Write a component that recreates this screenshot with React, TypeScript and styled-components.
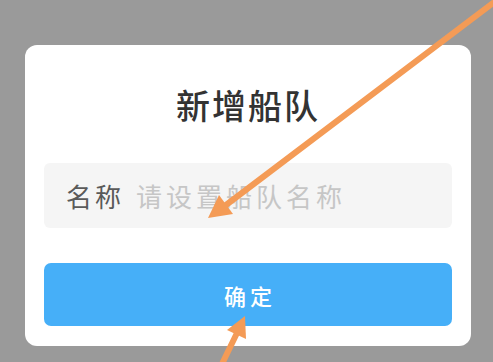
import styled, { createGlobalStyle } from "styled-components";

const GlobalStyle = createGlobalStyle`
  html, body {
    margin: 0;
    padding: 0;
    background: #9a9a9a;
  }
  body {
    font-family: "Noto Sans CJK SC", "Noto Sans", sans-serif;
  }
`;

const Page = styled.div`
  position: relative;
  width: 493px;
  height: 362px;
  overflow: hidden;
  padding: 45px 22px 0 25px;
  box-sizing: border-box;
`;

const Card = styled.div`
  width: 446px;
  height: 301px;
  box-sizing: border-box;
  background: #ffffff;
  border-radius: 12px;
  padding: 40px 19px 20px;
  display: flex;
  flex-direction: column;
`;

const Title = styled.h2`
  margin: 0;
  font-size: 34px;
  line-height: 40px;
  font-weight: 500;
  color: #333333;
  text-align: center;
  letter-spacing: 2px;
`;

const Field = styled.label`
  margin-top: 38px;
  height: 65px;
  border-radius: 6px;
  background: #f5f5f5;
  display: flex;
  align-items: center;
  gap: 12px;
  padding: 0 22px;
`;

const FieldLabel = styled.span`
  font-size: 26px;
  letter-spacing: 3px;
  color: #5a5a5a;
  white-space: nowrap;
`;

const FieldInput = styled.input`
  flex: 1;
  min-width: 0;
  border: none;
  background: transparent;
  font-family: inherit;
  font-size: 26px;
  letter-spacing: 4px;
  color: #333;
  padding: 0;

  &:focus {
    outline: none;
  }

  &::placeholder {
    color: #c6c6c6;
  }
`;

const Confirm = styled.button`
  margin-top: 35px;
  height: 63px;
  border: none;
  border-radius: 7px;
  background: #46aff8;
  color: #ffffff;
  font-family: inherit;
  font-size: 22px;
  font-weight: 500;
  letter-spacing: 4px;
  text-indent: 4px;
  cursor: pointer;
`;

const Marks = styled.svg`
  position: absolute;
  left: 0;
  top: 0;
  pointer-events: none;
`;

const ORANGE = "#f49b56";

export default function App() {
  return (
    <>
      <GlobalStyle />
      <Page>
        <Card>
          <Title>新增船队</Title>
          <Field>
            <FieldLabel>名称</FieldLabel>
            <FieldInput placeholder="请设置船队名称" />
          </Field>
          <Confirm>确定</Confirm>
        </Card>
        <Marks width="493" height="362" viewBox="0 0 493 362">
          <line x1="497" y1="0" x2="226" y2="205" stroke={ORANGE} strokeWidth="6" strokeLinecap="round" />
          <polygon points="208,218 233,214 219,195" fill={ORANGE} />
          <line x1="221" y1="366" x2="237" y2="333" stroke={ORANGE} strokeWidth="6" strokeLinecap="round" />
          <polygon points="245,316 246,339 227,330" fill={ORANGE} />
        </Marks>
      </Page>
    </>
  );
}
